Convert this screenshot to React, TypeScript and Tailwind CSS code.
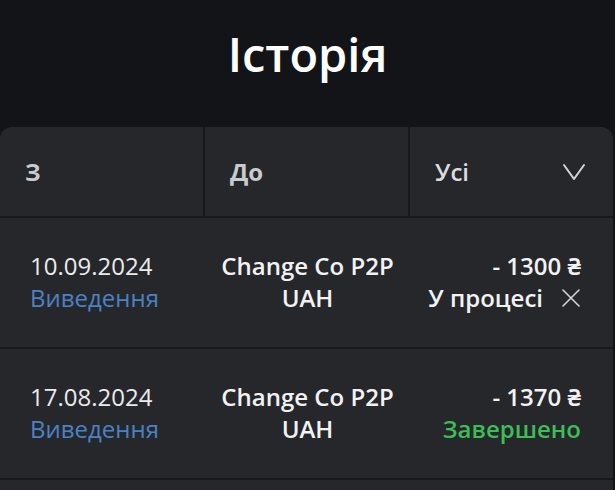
import React from 'react';

type Item = {
  date: string;
  type: string;
  to: string;
  currency: string;
  amount: string;
  status: 'pending' | 'done';
};

const items: Item[] = [
  { date: '10.09.2024', type: 'Виведення', to: 'Change Co P2P', currency: 'UAH', amount: '- 1300 ₴', status: 'pending' },
  { date: '17.08.2024', type: 'Виведення', to: 'Change Co P2P', currency: 'UAH', amount: '- 1370 ₴', status: 'done' },
];

const font = { fontFamily: '"Open Sans", "Noto Sans", sans-serif' };

const App: React.FC = () => {
  return (
    <div className="w-[615px] h-[490px] overflow-hidden bg-[#131418] text-white" style={font}>
      <div className="h-[127px] flex items-center justify-center pb-[18px]">
        <h1 className="text-[47px] font-semibold leading-none">Історія</h1>
      </div>

      <div className="w-[613px] rounded-t-[12px] overflow-hidden bg-[#18191c] flex flex-col gap-[2px]">
        <div className="grid grid-cols-[203px_203px_1fr] gap-[2px] h-[89px]">
          <div className="bg-[#26272b] flex items-center pl-[25px] text-[24px] font-bold text-[#c9cacd]">З</div>
          <div className="bg-[#26272b] flex items-center pl-[25px] text-[24px] font-bold text-[#c9cacd]">До</div>
          <div className="bg-[#26272b] flex items-center justify-between pl-[25px] pr-[27px] text-[24px] font-semibold text-[#dcdde0]">
            <span>Усі</span>
            <svg width="24" height="18" viewBox="0 0 24 18" fill="none" stroke="#d4d5d8" strokeWidth="2" strokeLinecap="round" strokeLinejoin="round">
              <path d="M2 2 L12 16 L22 2" />
            </svg>
          </div>
        </div>

        {items.map((item) => (
          <div key={item.date} className="bg-[#26272b] h-[129px] grid grid-cols-[205px_205px_1fr] items-center text-[24px] leading-[32px]">
            <div className="pl-[30px] pb-[2px]">
              <div className="text-[#ebebed]">{item.date}</div>
              <div className="text-[#4b82c4]">{item.type}</div>
            </div>
            <div className="text-center font-semibold text-[#f2f2f3] pb-[2px]">
              <div>{item.to}</div>
              <div>{item.currency}</div>
            </div>
            <div className="pr-[32px] text-right font-semibold pb-[2px]">
              <div className="text-[#f2f2f3]">{item.amount}</div>
              {item.status === 'pending' ? (
                <div className="flex items-center justify-end gap-[18px] text-[#f2f2f3]">
                  <span>У процесі</span>
                  <svg width="20" height="20" viewBox="0 0 20 20" fill="none" stroke="#d4d5d8" strokeWidth="1.6" strokeLinecap="round">
                    <path d="M2 2 L18 18 M18 2 L2 18" />
                  </svg>
                </div>
              ) : (
                <div className="text-[#3dbd57]">Завершено</div>
              )}
            </div>
          </div>
        ))}

        <div className="bg-[#26272b] h-[40px]" />
      </div>
    </div>
  );
};

export default App;
